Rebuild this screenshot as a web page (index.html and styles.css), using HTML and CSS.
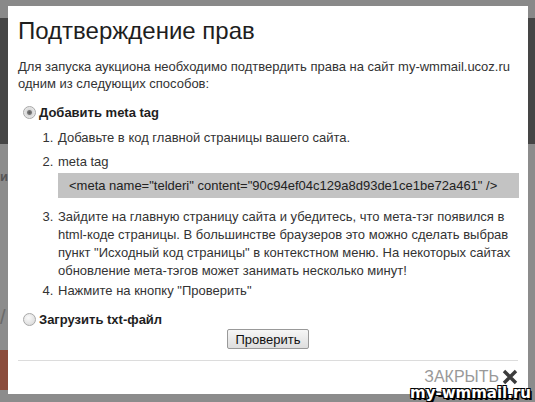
FILE: index.html
```html
<!DOCTYPE html>
<html lang="ru">
<head>
    <meta charset="UTF-8">
    <title>Подтверждение прав</title>
    <link rel="stylesheet" href="styles.css">
</head>
<body>
    <div class="backdrop">
        <div class="bar-top"></div>
        <div class="bar-dark"></div>
        <div class="side-text left">и</div>
        <div class="side-text slash">/</div>
        <div class="side-block"></div>
    </div>

    <div class="modal">
        <h1>Подтверждение прав</h1>
        <p class="intro">Для запуска аукциона необходимо подтвердить права на сайт my-wmmail.ucoz.ru одним из следующих способов:</p>

        <label class="method">
            <input type="radio" name="method" checked>
            <span>Добавить meta tag</span>
        </label>
        <ol class="steps">
            <li>Добавьте в код главной страницы вашего сайта.</li>
            <li>meta tag
                <div class="code">&lt;meta name="telderi" content="90c94ef04c129a8d93de1ce1be72a461" /&gt;</div>
            </li>
            <li>Зайдите на главную страницу сайта и убедитесь, что мета-тэг появился в html-коде страницы. В большинстве браузеров это можно сделать выбрав пункт "Исходный код страницы" в контекстном меню. На некоторых сайтах обновление мета-тэгов может занимать несколько минут!</li>
            <li>Нажмите на кнопку "Проверить"</li>
        </ol>

        <label class="method second">
            <input type="radio" name="method">
            <span>Загрузить txt-файл</span>
        </label>

        <div class="actions">
            <button type="button">Проверить</button>
        </div>

        <div class="footer">
            <a href="#" class="close">ЗАКРЫТЬ
                <svg width="16" height="16" viewBox="0 0 16 16">
                    <path d="M2 2 L14 14 M14 2 L2 14" stroke="#3c3c3c" stroke-width="3.4"/>
                </svg>
            </a>
        </div>
    </div>

    <div class="watermark">my-wmmail.ru</div>
</body>
</html>
```

FILE: styles.css
```css
body {
    margin: 0;
    width: 535px;
    height: 402px;
    overflow: hidden;
    position: relative;
    background-color: #8c8c8c;
    font-family: Arial, "Liberation Sans", sans-serif;
}

/* dimmed page behind the dialog */
.backdrop {
    position: absolute;
    inset: 0;
}
.bar-top {
    height: 18px;
    background-color: #898989;
}
.bar-dark {
    height: 126px;
    background-color: #454545;
}
.side-text {
    position: absolute;
    color: #555;
    font-weight: bold;
    font-size: 13px;
}
.side-text.left {
    left: 0;
    top: 169px;
}
.side-text.slash {
    left: 0;
    top: 306px;
    font-size: 20px;
    font-weight: normal;
    color: #6a6a6a;
}
.side-block {
    position: absolute;
    left: 0;
    top: 350px;
    width: 10px;
    height: 40px;
    background-color: #8a4c3c;
}

.modal {
    position: absolute;
    left: 8px;
    top: 6px;
    width: 520px;
    height: 388px;
    background-color: #fff;
    box-sizing: border-box;
    padding: 10px 10px 0 10px;
    color: #2b2b2b;
    font-size: 13px;
}

h1 {
    margin: 0;
    font-weight: normal;
    font-size: 24px;
    line-height: 30px;
    color: #1e1e1e;
}

.intro {
    margin: 12px 0 0 0;
    line-height: 17px;
    color: #333;
}

.method {
    display: flex;
    align-items: center;
    margin-top: 12px;
    line-height: 17px;
    font-weight: bold;
    color: #1e1e1e;
}
.method.second {
    margin-top: 11px;
}

/* grey classic-style radio */
.method input {
    appearance: none;
    margin: 0 3px 0 5px;
    width: 13px;
    height: 13px;
    border-radius: 50%;
    border: 1px solid #a8a8a8;
    background: radial-gradient(circle at 40% 35%, #fafafa, #d4d4d4);
    box-sizing: border-box;
}
.method input:checked {
    background: radial-gradient(circle, #5a5a5a 0, #7a7a7a 2px, #d8d8d8 3px, #ececec 6px);
}

.steps {
    margin: 8px 0 0 0;
    padding-left: 39px;
    line-height: 18px;
    color: #333;
}
.steps li {
    margin-bottom: 2px;
    padding-left: 1px;
}
.steps li:first-child {
    margin-bottom: 6px;
}
.code {
    margin-top: 2px;
    margin-bottom: 10px;
    background-color: #c3c3c3;
    line-height: 25px;
    padding-left: 11px;
    margin-right: -1px;
    color: #222;
}

.actions {
    text-align: center;
    margin-top: 1px;
}
.actions button {
    font-family: Arial, "Liberation Sans", sans-serif;
    font-size: 13px;
    padding: 0 7px;
    height: 20px;
    border: 1px solid #999;
    border-radius: 2px;
    background: linear-gradient(#f6f6f6, #dedede);
    color: #111;
}

.footer {
    margin-top: 11px;
    border-top: 1px solid #dcdcdc;
    display: flex;
    justify-content: flex-end;
    padding-top: 7px;
}
.close {
    display: flex;
    align-items: center;
    gap: 3px;
    text-decoration: none;
    color: #999;
    font-size: 16px;
    line-height: 18px;
}

.watermark {
    position: absolute;
    right: 4px;
    bottom: 0;
    font-family: "DejaVu Sans", sans-serif;
    font-weight: bold;
    font-size: 15px;
    line-height: 17px;
    color: #fff;
    text-shadow: 1px 1px 0 #000, -1px -1px 0 #000, 1px -1px 0 #000, -1px 1px 0 #000, 2px 2px 0 #000;
}
```
